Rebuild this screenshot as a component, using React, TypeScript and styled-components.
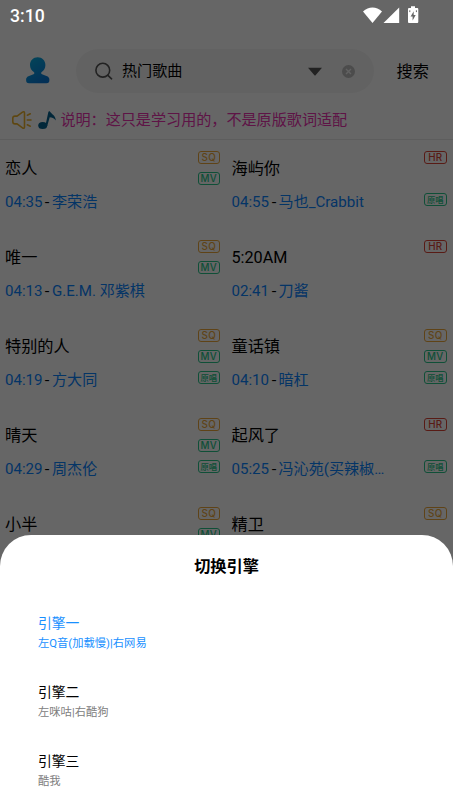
import React from "react";
import styled, { createGlobalStyle } from "styled-components";

const GlobalStyle = createGlobalStyle`
  * { box-sizing: border-box; }
  html, body { margin: 0; padding: 0; }
  body {
    font-family: Roboto, "Noto Sans CJK SC", sans-serif;
    color: #000;
    background: #fff;
    overflow: hidden;
  }
`;

const Screen = styled.div`
  position: relative;
  width: 453px;
  height: 805px;
  overflow: hidden;
  background: #fff;
`;

const Page = styled.div`
  display: flex;
  flex-direction: column;
  height: 100%;
  padding-top: 32px;
`;

const Toolbar = styled.header`
  display: flex;
  align-items: center;
  height: 78px;
  padding: 0 24px;
`;

const Avatar = styled.svg`
  display: block;
  width: 28px;
  height: 30px;
`;

const SearchBox = styled.div`
  display: flex;
  align-items: center;
  width: 298px;
  height: 44px;
  margin-left: 24px;
  padding: 0 19px 0 19px;
  border-radius: 22px;
  background: #f6f6f6;
`;

const SearchText = styled.span`
  flex: 1;
  margin-left: 8px;
  font-size: 15.1px;
  line-height: 22px;
`;

const ClearIcon = styled.svg`
  margin-left: 20px;
`;

const SearchButton = styled.span`
  margin-left: 22.5px;
  padding-top: 1px;
  font-size: 16.2px;
  line-height: 22px;
  white-space: nowrap;
`;

const Notice = styled.div`
  display: flex;
  align-items: center;
  height: 30px;
  padding: 0 0 9px 11px;
  border-bottom: 1px solid #e9e9e9;
  color: #ec32b0;
  font-size: 15.1px;
  line-height: 20px;
  white-space: nowrap;
`;

const NoteIcon = styled.svg`
  margin-left: 5px;
`;

const NoticeText = styled.span`
  margin-left: 3.4px;
`;

const SongGrid = styled.main`
  display: grid;
  grid-template-columns: 226.5px 226.5px;
  grid-auto-rows: 89px;
  padding-top: 1px;
`;

const SongCell = styled.article`
  display: flex;
  justify-content: space-between;
  padding: 0 6px 0 5px;
`;

const SongInfo = styled.div`
  min-width: 0;
  padding-top: 16px;
`;

const SongTitle = styled.div`
  font-size: 16.2px;
  line-height: 24px;
  white-space: nowrap;
`;

const SongMeta = styled.div`
  margin-top: 10px;
  color: #000;
  font-size: 15.1px;
  line-height: 22px;
  white-space: nowrap;
`;

const Blue = styled.span`
  color: #0a84ff;
`;

const Dash = styled.span`
  margin: 0 2.6px;
  display: inline-block;
  transform: scaleX(1.1);
`;

const Badges = styled.div`
  display: grid;
  grid-template-rows: 21px 20.5px 14px;
  padding-top: 10px;
  width: 23px;
  flex: none;
`;

type BadgeKind = "SQ" | "HR" | "MV" | "原唱";

const badgeColors: Record<BadgeKind, string> = {
  SQ: "#eda93b",
  HR: "#dd4436",
  MV: "#27c58a",
  原唱: "#27c58a",
};

const Badge = styled.span<{ $kind: BadgeKind }>`
  grid-row: ${(p) => (p.$kind === "原唱" ? 3 : p.$kind === "MV" ? 2 : 1)};
  display: flex;
  align-items: center;
  justify-content: center;
  width: 22.5px;
  height: 13px;
  border: 1px solid ${(p) => badgeColors[p.$kind]};
  border-radius: 3px;
  color: ${(p) => badgeColors[p.$kind]};
  font-family: ${(p) => (p.$kind === "原唱" ? '"Noto Sans CJK SC"' : 'Inter')}, sans-serif;
  font-size: ${(p) => (p.$kind === "原唱" ? "8.3px" : "9.8px")};
  font-weight: 500;
  letter-spacing: ${(p) => (p.$kind === "原唱" ? "0" : "0.2px")};
  line-height: 11px;
  white-space: nowrap;
`;

const Mask = styled.div`
  position: absolute;
  inset: 0;
  background: rgba(0, 0, 0, 0.6);
`;

const StatusBar = styled.div`
  position: absolute;
  top: 0;
  left: 0;
  right: 0;
  height: 32px;
  display: flex;
  align-items: center;
  justify-content: space-between;
  padding: 0 34px 0 10px;
  color: #fff;
`;

const Clock = styled.span`
  font-size: 17.6px;
  font-weight: 500;
  line-height: 20px;
`;

const StatusIcons = styled.svg`
  display: block;
  margin-top: -1px;
`;

const Sheet = styled.section`
  position: absolute;
  left: 0;
  right: 0;
  bottom: 0;
  height: 270.5px;
  padding-top: 20.5px;
  border-radius: 31px 31px 0 0;
  background: #fff;
`;

const SheetTitle = styled.h2`
  margin: 0 0 22px;
  font-size: 16.2px;
  font-weight: 700;
  line-height: 24px;
  text-align: center;
`;

const Option = styled.div<{ $active?: boolean }>`
  height: 69px;
  padding: 12px 38px 0;
  color: ${(p) => (p.$active ? "#1890ff" : "#000")};
`;

const OptionName = styled.div`
  font-size: 13.8px;
  line-height: 21px;
`;

const OptionHint = styled.div<{ $active?: boolean }>`
  margin-top: 1px;
  color: ${(p) => (p.$active ? "#1890ff" : "#808080")};
  font-size: 11.3px;
  line-height: 18px;
`;

type Song = { title: string; time?: string; artist?: string; badges: BadgeKind[] };

const songs: Song[] = [
  { title: "恋人", time: "04:35", artist: "李荣浩", badges: ["SQ", "MV"] },
  { title: "海屿你", time: "04:55", artist: "马也_Crabbit", badges: ["HR", "原唱"] },
  { title: "唯一", time: "04:13", artist: "G.E.M. 邓紫棋", badges: ["SQ", "MV"] },
  { title: "5:20AM", time: "02:41", artist: "刀酱", badges: ["HR"] },
  { title: "特别的人", time: "04:19", artist: "方大同", badges: ["SQ", "MV", "原唱"] },
  { title: "童话镇", time: "04:10", artist: "暗杠", badges: ["SQ", "MV", "原唱"] },
  { title: "晴天", time: "04:29", artist: "周杰伦", badges: ["SQ", "MV", "原唱"] },
  { title: "起风了", time: "05:25", artist: "冯沁苑(买辣椒…", badges: ["HR", "原唱"] },
  { title: "小半", badges: ["SQ", "MV"] },
  { title: "精卫", badges: ["SQ"] },
];

const engines = [
  { name: "引擎一", hint: "左Q音(加载慢)|右网易" },
  { name: "引擎二", hint: "左咪咕|右酷狗" },
  { name: "引擎三", hint: "酷我" },
];

export default function App() {
  return (
    <>
      <GlobalStyle />
      <Screen>
        <Page>
          <Toolbar>
            <Avatar viewBox="0 0 28 30">
              <defs>
                <linearGradient id="person" x1="0" y1="0" x2="0.6" y2="1">
                  <stop offset="0" stopColor="#08b2e0" />
                  <stop offset="1" stopColor="#0878d8" />
                </linearGradient>
              </defs>
              <path
                fill="url(#person)"
                d="M13.7 1.3c4.400 0 7.700 3.300 7.700 7.700 0 3.200-1.500 5.600-3.700 7.100-.8.600-.8 1.700.3 2.200l5.100 2c1.500.7 2.300 1.900 2.300 3.400 0 2.600-.9 3.500-2.900 3.500H5c-2 0-2.900-.9-2.900-3.500 0-1.500.8-2.700 2.300-3.400l5.100-2c1.100-.5 1.100-1.600.3-2.200C7.600 14.600 6 12.200 6 9c0-4.400 3.300-7.700 7.700-7.700Z"
              />
            </Avatar>
            <SearchBox>
              <svg width="19" height="19" viewBox="0 0 19 19" fill="none" stroke="#555" strokeWidth="1.600" strokeLinecap="round">
                <circle cx="7.800" cy="8.200" r="6.900" />
                <path d="m12.900 13.300 3.700 3.500" />
              </svg>
              <SearchText>热门歌曲</SearchText>
              <svg width="14" height="9" viewBox="0 0 14 9">
                <path d="M0 .8h14L7.800 7.900a1 1 0 0 1-1.600 0Z" fill="#555" />
              </svg>
              <ClearIcon width="13" height="13" viewBox="0 0 13 13">
                <circle cx="6.500" cy="6.500" r="6.500" fill="#bdbdbd" />
                <path d="m4 4 5 5m0-5-5 5" stroke="#f6f6f6" strokeWidth="1.400" />
              </ClearIcon>
            </SearchBox>
            <SearchButton>搜索</SearchButton>
          </Toolbar>
          <Notice>
            <svg width="22" height="20" viewBox="0 0 22 20" fill="none" stroke="#ecb12c" strokeWidth="1.600" strokeLinecap="round" strokeLinejoin="round">
              <path d="M4 6.100h2.100l5.400-4c1.100-.8 2-.3 2 .9v14c0 1.200-.9 1.700-2 .9l-5.400-4H4c-1.400 0-2.200-.8-2.200-2.200V8.300c0-1.400.8-2.200 2.200-2.200ZM16.300 5.200l3-1.400M16.300 10h3.700M16.300 14.800l3 1.400" />
            </svg>
            <NoteIcon width="19" height="20" viewBox="0 0 19 20">
              <ellipse cx="4.700" cy="15.500" rx="4.500" ry="3.500" fill="#06628f" />
              <path d="M7.400 15.800 10.300 2.200c.2-1 1.200-1.300 1.800-.5 1.200 2.300 5.500 3.600 5.700 8.700-1.600-2.200-3.900-2.900-6.100-3.100L9.200 16" fill="#06628f" />
            </NoteIcon>
            <NoticeText>说明：这只是学习用的，不是原版歌词适配</NoticeText>
          </Notice>
          <SongGrid>
            {songs.map((song) => (
              <SongCell key={song.title}>
                <SongInfo>
                  <SongTitle>{song.title}</SongTitle>
                  {song.time && (
                    <SongMeta>
                      <Blue>{song.time}</Blue>
                      <Dash>-</Dash>
                      <Blue>{song.artist}</Blue>
                    </SongMeta>
                  )}
                </SongInfo>
                <Badges>
                  {song.badges.map((kind) => (
                    <Badge key={kind} $kind={kind}>{kind}</Badge>
                  ))}
                </Badges>
              </SongCell>
            ))}
          </SongGrid>
        </Page>
        <Mask />
        <StatusBar>
          <Clock>3:10</Clock>
          <StatusIcons width="56" height="20" viewBox="0 0 56 20" fill="#fff">
            <path d="M0 5.500C5.700.3 13.300.3 19 5.500L9.500 17Z" />
            <path d="M36.200 1.400V17H20.500Z" />
            <path
              fillRule="evenodd"
              d="M48 .2h4v1.700h2c.8 0 1.300.5 1.300 1.300v12.500c0 .8-.5 1.300-1.300 1.300h-7.700c-.8 0-1.300-.5-1.300-1.300V3.200c0-.8.500-1.300 1.300-1.300H48ZM50.700 5.200l-3.100 5.200h2v4l3.100-5.400h-2Z"
            />
            <path d="M46.800 4.300v1.800M53.400 4.300v1.800" stroke="#666" strokeWidth="1" />
          </StatusIcons>
        </StatusBar>
        <Sheet>
          <SheetTitle>切换引擎</SheetTitle>
          {engines.map((engine, i) => (
            <Option key={engine.name} $active={i === 0}>
              <OptionName>{engine.name}</OptionName>
              <OptionHint $active={i === 0}>{engine.hint}</OptionHint>
            </Option>
          ))}
        </Sheet>
      </Screen>
    </>
  );
}
